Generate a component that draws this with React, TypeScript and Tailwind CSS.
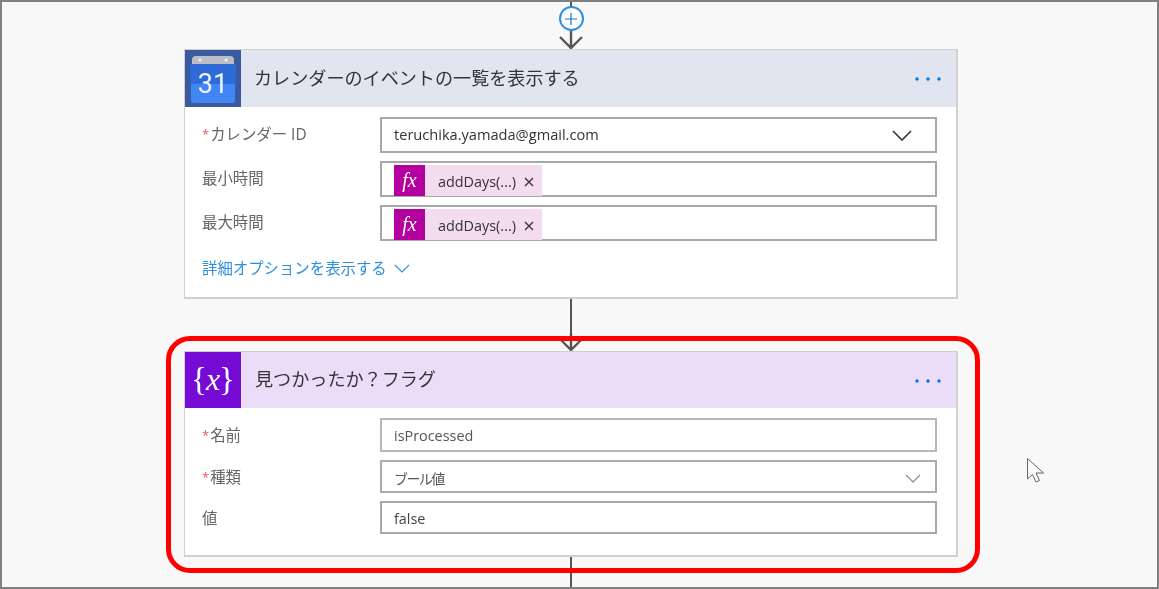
import React from "react";

const fontStack = "font-['Open_Sans','Noto_Sans_CJK_JP',sans-serif]";

const Arrow = () => (
  <svg width="26" height="18" viewBox="0 0 26 18" className="block shrink-0">
    <path d="M13 0 V16 M2 6 L13 17 L24 6" fill="none" stroke="#555" strokeWidth="2.4" />
  </svg>
);

const Dots = () => (
  <svg width="28" height="6" viewBox="0 0 28 6" className="mr-[14px] mt-[1px] shrink-0">
    <circle cx="3" cy="3" r="1.7" fill="#0078d7" />
    <circle cx="14" cy="3" r="1.7" fill="#0078d7" />
    <circle cx="25" cy="3" r="1.7" fill="#0078d7" />
  </svg>
);

const CalendarIcon = () => (
  <div className="w-[56px] h-full bg-[#3a5a9f] flex items-center justify-center shrink-0">
    <svg width="48" height="50" viewBox="0 0 48 50">
      <path d="M3 6 Q3 2 7 2 L41 2 Q45 2 45 6 L45 11 L3 11 Z" fill="#bcbec6" />
      <circle cx="11" cy="6" r="1.5" fill="#eef0f4" />
      <circle cx="37" cy="6" r="1.5" fill="#eef0f4" />
      <path d="M1 10 L47 10 L46 47 Q46 49 44 49 L4 49 Q2 49 2 47 Z" fill="#2f6bd8" />
      <path d="M2 30 L46 30 L46 47 Q46 49 44 49 L4 49 Q2 49 2 47 Z" fill="#4285f4" />
      <text x="24" y="38.5" textAnchor="middle" fontSize="27" fill="#eef3fb" fontFamily="Roboto, sans-serif">
        31
      </text>
    </svg>
  </div>
);

const VariableIcon = () => (
  <div className="w-[56px] h-full bg-[#770bd6] flex items-center justify-center shrink-0 text-white font-['Liberation_Serif',serif] leading-none pb-[2px]">
    <span className="text-[33px]">{"{"}</span>
    <span className="text-[32px] italic -mx-[1px]">x</span>
    <span className="text-[33px]">{"}"}</span>
  </div>
);

const Label = ({ text, required, className = "" }: { text: string; required?: boolean; className?: string }) => (
  <div className={`${className} w-[195px] pl-[17px] text-[15.4px] text-[#666] shrink-0 flex items-center`}>
    {required && <span className="text-[#ee5560] text-[13px] mr-[1px]">*</span>}
    {text}
  </div>
);

const Chip = () => (
  <div className="flex items-center h-[31px] w-[148px] bg-[#f4dcf0] mt-[2px]">
    <div className="w-[31px] h-full bg-[#b4009e] text-white flex items-center justify-center italic text-[20px] font-['Liberation_Serif',serif]">
      fx
    </div>
    <span className="ml-[13px] pt-[3px] text-[14.4px] text-[#333]">addDays(...)</span>
    <svg width="10" height="10" viewBox="0 0 10 10" className="ml-[8px] mt-[4px]">
      <path d="M1 1 L9 9 M9 1 L1 9" stroke="#333" strokeWidth="1.3" />
    </svg>
  </div>
);

const Field = ({ className, children }: { className: string; children: React.ReactNode }) => (
  <div className={`${className} w-[557px] border-2 bg-white flex items-center pl-[12px] text-[14.4px] text-[#333] shrink-0`}>
    {children}
  </div>
);

export default function App() {
  return (
    <div className={`relative w-[1159px] h-[589px] border-2 border-[#808080] bg-[#f8f8f8] overflow-hidden blur-[0.4px] ${fontStack}`}>
      <div className="w-[774px] ml-[182px]">
        {/* top connector */}
        <div className="h-[47px] flex flex-col items-center">
          <div className="w-[2px] h-[4px] bg-[#555] shrink-0" />
          <div className="w-[25px] h-[25px] rounded-full border-2 border-[#2a8fe0] bg-[#fdfdfd] flex items-center justify-center shrink-0">
            <svg width="12" height="12" viewBox="0 0 12 12">
              <path d="M6 0 V12 M0 6 H12" stroke="#1678c8" strokeWidth="1.2" />
            </svg>
          </div>
          <Arrow />
        </div>

        {/* calendar card */}
        <div className="h-[250px] border-t border-l border-r-2 border-b-2 border-[#d0d0d0] bg-white">
          <div className="h-[57px] bg-[#e1e5f0] flex items-center">
            <CalendarIcon />
            <div className="flex-1 ml-[13px] text-[18.1px] text-[#333]">カレンダーのイベントの一覧を表示する</div>
            <Dots />
          </div>
          <div className="pt-[10px] flex flex-col gap-[8px]">
            <div className="flex">
              <Label text="カレンダー ID" required />
              <Field className="h-[36px] border-[#a8a8a8]">
                <span className="flex-1 text-[14.6px]">teruchika.yamada@gmail.com</span>
                <svg width="20" height="11" viewBox="0 0 20 11" className="mr-[23px] mt-[1px]">
                  <path d="M1 1 L10 10 L19 1" fill="none" stroke="#333" strokeWidth="1.6" />
                </svg>
              </Field>
            </div>
            <div className="flex">
              <Label text="最小時間" />
              <Field className="h-[36px] border-[#a8a8a8]">
                <Chip />
              </Field>
            </div>
            <div className="flex">
              <Label text="最大時間" />
              <Field className="h-[36px] border-[#a8a8a8]">
                <Chip />
              </Field>
            </div>
          </div>
          <div className="mt-[16px] pl-[17px] flex items-center text-[15.4px] text-[#2e8fdc]">
            詳細オプションを表示する
            <svg width="16" height="9" viewBox="0 0 16 9" className="ml-[7px]">
              <path d="M1 1 L8 8 L15 1" fill="none" stroke="#2e8fdc" strokeWidth="1.2" />
            </svg>
          </div>
        </div>

        {/* connector */}
        <div className="h-[52px] flex flex-col items-center">
          <div className="w-[2px] h-[34px] bg-[#555] shrink-0" />
          <Arrow />
        </div>

        {/* variable card, red highlight lies over it */}
        <div className="relative h-[206px] border-t border-l border-r-2 border-b-2 border-[#d0d0d0] bg-white">
          <div className="h-[56px] bg-[#ebdcf8] flex items-center">
            <VariableIcon />
            <div className="flex-1 ml-[14px] text-[18.1px] text-[#333]">見つかったか？フラグ</div>
            <Dots />
          </div>
          <div className="pt-[10px] flex flex-col gap-[8px]">
            <div className="flex">
              <Label text="名前" required className="pt-[2px]" />
              <Field className="h-[34px] border-[#b8b8b8]">
                <span className="pt-[2px] text-[#555]">isProcessed</span>
              </Field>
            </div>
            <div className="flex">
              <Label text="種類" required className="pt-[2px]" />
              <Field className="h-[33px] border-[#acacac]">
                <span className="flex-1 pt-[3px] text-[14px] tracking-[-1.6px] text-[#555]">ブール値</span>
                <svg width="16" height="9" viewBox="0 0 16 9" className="mr-[14px] mt-[4px]">
                  <path d="M1 1 L8 8 L15 1" fill="none" stroke="#888" strokeWidth="1.2" />
                </svg>
              </Field>
            </div>
            <div className="flex">
              <Label text="値" className="pt-[3px]" />
              <Field className="h-[33px] border-[#a8a8a8]">
                <span className="pt-[2px] text-[#444]">false</span>
              </Field>
            </div>
          </div>
          <div className="absolute -left-[19px] -right-[24px] -top-[16px] -bottom-[18px] border-[5px] border-[#ff0000] rounded-[24px] pointer-events-none" />
        </div>

        <div className="w-[2px] h-[40px] bg-[#555] mx-auto" />
      </div>

      {/* mouse cursor */}
      <svg width="19" height="27" viewBox="0 0 19 27" className="absolute left-[1024px] top-[455px]">
        <path d="M1.5 1.5 L1.5 22 L6.5 17.5 L10 25 L13.5 23.5 L10 16 L17.5 16 Z" fill="#fafafa" stroke="#666" strokeWidth="1" />
      </svg>
    </div>
  );
}
